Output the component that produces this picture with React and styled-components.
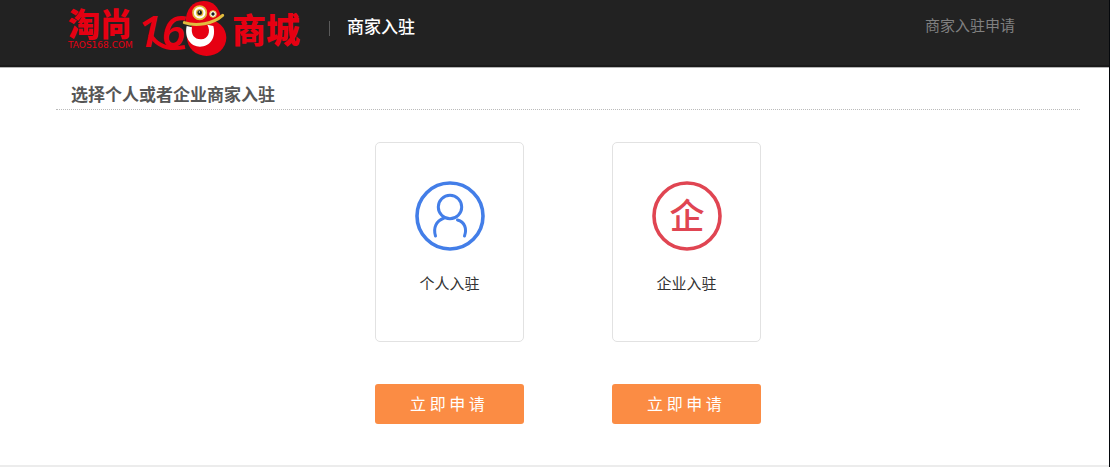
import React from 'react';
import styled, {createGlobalStyle} from 'styled-components';

const options = [
    {id: 'personal', label: '个人入驻', icon: 'person'},
    {id: 'company', label: '企业入驻', icon: 'company'},
];

const Logo = () => (
    <LogoSvg viewBox="0 0 236 60" role="img" aria-label="淘尚168商城">
        <g fill="#e60012" fontFamily='"Noto Sans CJK SC", sans-serif' fontWeight="900">
            <text x="1" y="36" fontSize="32">淘尚</text>
            <text x="165" y="43" fontSize="34">商城</text>
        </g>
        <text x="1" y="48" fill="#e60012" fontFamily='"DejaVu Sans", sans-serif' fontSize="9">TAOS168.COM</text>
        <text x="70" y="47" fill="#e60012" fontFamily='"Open Sans", sans-serif' fontSize="44" fontWeight="600" fontStyle="italic">16</text>
        <path d="M83 34 C88 43 98 51 118 47" fill="none" stroke="#e60012" strokeWidth="4" />
        {/* mascot standing in for the 8 */}
        <g transform="translate(107 0) scale(.3333)">
            <ellipse cx="98" cy="113" rx="59" ry="55" fill="#e60012" />
            <path d="M38 78 C30 116 52 140 78 140 C108 140 127 113 118 78 L100 74 C112 96 101 117 82 118 C62 119 50 104 54 82 Z" fill="#fff" />
            <path d="M35 68 C34 28 57 3 89 3 C116 3 134 20 140 48 C111 74 72 82 35 68 Z" fill="#e60012" />
            <path d="M31 68 C67 80 117 72 146 46" fill="none" stroke="#e2bd3f" strokeWidth="9" strokeLinecap="round" />
            <circle cx="77" cy="38" r="20" fill="#fff" stroke="#e2bd3f" strokeWidth="5" />
            <circle cx="77" cy="38" r="11" fill="#e2bd3f" />
            <circle cx="77" cy="38" r="7" fill="#1a1a1a" />
            <circle cx="76" cy="36" r="2" fill="#fff" />
            <circle cx="117" cy="42" r="10" fill="#fff" stroke="#e2bd3f" strokeWidth="3" />
            <circle cx="117" cy="42" r="5" fill="#1a1a1a" />
        </g>
    </LogoSvg>
);

const PersonIcon = () => (
    <RoundIcon viewBox="0 0 70 70" $color="#437ee8" aria-hidden="true">
        <circle cx="35" cy="35" r="33" strokeWidth="3.6" />
        <circle cx="35" cy="26" r="11.7" strokeWidth="3" />
        <path d="M29 37 C21 40 18 47 20.500 55 M42.500 39 C50 41 52 48 49.500 55" strokeWidth="3" strokeLinecap="round" />
    </RoundIcon>
);

const CompanyIcon = () => (
    <RoundIcon viewBox="0 0 70 70" $color="#e04552" aria-hidden="true">
        <circle cx="35" cy="35" r="33" strokeWidth="3.6" />
        <IconText x="35" y="48">企</IconText>
    </RoundIcon>
);

const App = () => {
    return (
        <>
            <GlobalStyle />
            <Page>
                <Header>
                    <Logo />
                    <Separator />
                    <SiteTitle>商家入驻</SiteTitle>
                    <NavLink href="#apply">商家入驻申请</NavLink>
                </Header>
                <Main>
                    <SectionTitle>选择个人或者企业商家入驻</SectionTitle>
                    <Options>
                        {options.map(option => (
                            <Option key={option.id}>
                                <Card>
                                    {option.icon === 'person' ? <PersonIcon /> : <CompanyIcon />}
                                    <Label id={option.id}>{option.label}</Label>
                                </Card>
                                <ApplyButton type="button" aria-describedby={option.id}>立 即 申 请</ApplyButton>
                            </Option>
                        ))}
                    </Options>
                </Main>
                <Footer />
            </Page>
        </>
    );
}

const GlobalStyle = createGlobalStyle`
    * {
        box-sizing: border-box;
    }

    body {
        margin: 0;
        background: #fff;
        color: #333;
        font-family: "Noto Sans CJK SC", sans-serif;
    }
`;

const Page = styled.div`
    border-right: 1px solid #05080c;
`;

const Header = styled.header`
    display: flex;
    align-items: flex-start;
    height: 68px;
    padding: 0 94px 0 67px;
    background: #222;
    border-bottom: 1px solid #b5b5b5;
    box-shadow: inset 0 -2px 0 #1a1a1a;
`;

const LogoSvg = styled.svg`
    flex: none;
    width: 236px;
    height: 60px;
    overflow: visible;
`;

const Separator = styled.span`
    width: 1px;
    height: 15px;
    margin: 21px 17px 0 26px;
    background: #5a5a5a;
`;

const SiteTitle = styled.h1`
    margin: 14px 0 0;
    color: #fff;
    font-size: 17px;
    font-weight: 500;
    line-height: 24px;
`;

const NavLink = styled.a`
    margin: 13px 0 0 auto;
    color: #808080;
    font-size: 15px;
    line-height: 24px;
    text-decoration: none;
`;

const Main = styled.main`
    padding: 14px 29px 41px 56px;
`;

const SectionTitle = styled.h2`
    margin: 0;
    padding: 0 15px 3px;
    border-bottom: 1px dotted #bbb;
    color: #555;
    font-size: 17px;
    font-weight: 700;
    line-height: 24px;
`;

const Options = styled.div`
    display: flex;
    justify-content: center;
    gap: 88px;
    padding-top: 32px;
`;

const Option = styled.section`
    display: flex;
    flex-direction: column;
    gap: 42px;
    width: 149px;
`;

const Card = styled.div`
    display: flex;
    flex-direction: column;
    align-items: center;
    gap: 20px;
    height: 200px;
    padding-top: 38px;
    border: 1px solid #e2e2e2;
    border-radius: 5px;
`;

const RoundIcon = styled.svg`
    width: 70px;
    height: 70px;
    fill: none;
    stroke: ${props => props.$color};
    color: ${props => props.$color};
`;

const IconText = styled.text`
    fill: currentColor;
    stroke: none;
    font-size: 35px;
    font-weight: 500;
    text-anchor: middle;
`;

const Label = styled.p`
    margin: 0;
    font-size: 15px;
    line-height: 24px;
`;

const ApplyButton = styled.button`
    height: 40px;
    padding: 0 4px 2px 0;
    border: 0;
    border-radius: 3px;
    background: #fb8c44;
    color: #fff;
    font-family: inherit;
    font-size: 16px;
    line-height: 24px;
    cursor: pointer;
`;

const Footer = styled.footer`
    border-top: 2px solid #ececec;
`;

export default App;
